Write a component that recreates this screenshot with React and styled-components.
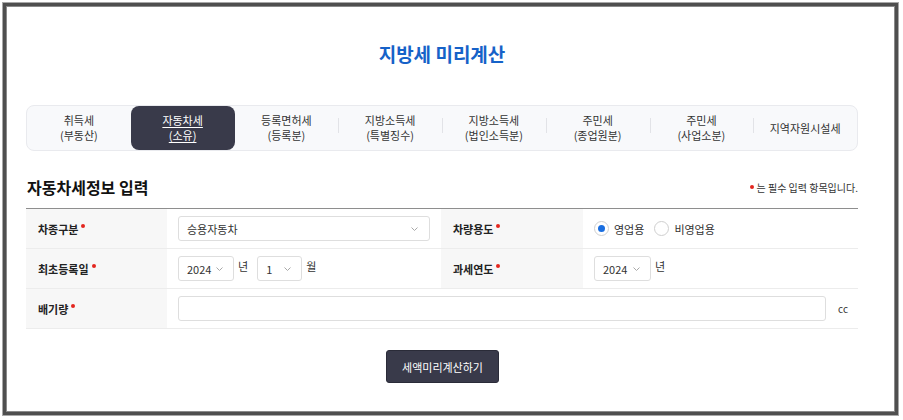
import React from "react";
import styled, { createGlobalStyle } from "styled-components";

const Global = createGlobalStyle`
  html, body { margin: 0; padding: 0; background: #fff; }
  body { font-family: "Noto Sans CJK KR", "Noto Sans", sans-serif; color: #333; }
  * { box-sizing: border-box; }
`;

const Frame = styled.div`
  margin: 3px;
  width: 895px;
  height: 412px;
  border: 3px solid #4f4f4f;
  box-shadow: 0 0 0 1px #a8a8a8, inset 0 0 0 1px #8a8a8a;
  background: #fff;
  padding: 0 0 0 20px;
`;

const Content = styled.div`
  width: 832px;
  display: flex;
  flex-direction: column;
`;

const Title = styled.h1`
  margin: 35px 0 0;
  font-size: 19px;
  line-height: 26px;
  font-weight: 700;
  color: #1662c8;
  text-align: center;
`;

const TabBar = styled.div`
  margin-top: 38px;
  height: 46px;
  display: grid;
  grid-template-columns: repeat(8, 1fr);
  background: #f8f9fb;
  border: 1px solid #e9eaee;
  border-radius: 8px;
`;

const Tab = styled.div`
  position: relative;
  display: flex;
  align-items: center;
  justify-content: center;
  text-align: center;
  font-size: 11px;
  line-height: 15px;
  color: ${(p) => (p.$active ? "#fff" : "#333")};
  background: ${(p) => (p.$active ? "#393a4a" : "transparent")};
  border-radius: 8px;
  text-decoration: ${(p) => (p.$active ? "underline" : "none")};
  text-underline-offset: 2px;
  &::before {
    content: "";
    display: ${(p) => (p.$sep ? "block" : "none")};
    position: absolute;
    left: 0;
    top: 12px;
    width: 1px;
    height: 15px;
    background: #e2e3e7;
  }
`;

const HeadRow = styled.div`
  margin-top: 24px;
  display: flex;
  align-items: center;
  justify-content: space-between;
  height: 24px;
`;

const Heading = styled.h2`
  margin: 0 0 0 1px;
  font-size: 16px;
  line-height: 24px;
  font-weight: 700;
  color: #111;
`;

const Note = styled.span`
  font-size: 10px;
  color: #333;
  display: flex;
  align-items: center;
  gap: 3px;
`;

const Dot = styled.span`
  display: inline-block;
  width: 4px;
  height: 4px;
  border-radius: 50%;
  background: #e3261f;
  flex: none;
`;

const Table = styled.div`
  margin-top: 9px;
  border-top: 1px solid #8e8e8e;
  display: grid;
  grid-template-columns: 141px 274px 142px 1fr;
`;

const Label = styled.div`
  height: 40px;
  background: #f7f7f7;
  border-bottom: 1px solid #ececec;
  display: flex;
  align-items: center;
  padding-left: 12px;
  font-size: 11px;
  font-weight: 700;
  color: #222;
  gap: 3px;
  & > ${Dot} { margin-top: -5px; }
`;

const Cell = styled.div`
  height: 40px;
  border-bottom: 1px solid #ececec;
  display: flex;
  align-items: center;
  padding: 0 11px;
  gap: ${(p) => p.$gap || "4px"};
  grid-column: ${(p) => p.$span || "auto"};
  font-size: 11px;
  color: #333;
`;

const SelectBox = styled.div`
  width: ${(p) => p.$w};
  height: 25px;
  border: 1px solid #dedede;
  border-radius: 3px;
  background: #fff;
  display: flex;
  align-items: center;
  justify-content: space-between;
  padding: 0 ${(p) => p.$pr || "12px"} 0 8px;
  font-size: 11px;
  color: #333;
  flex: none;
`;

const Unit = styled.span`
  font-size: 11px;
  color: #333;
  align-self: flex-start;
  margin-top: 9px;
  margin-right: ${(p) => p.$mr || "0"};
`;

const TextInput = styled.div`
  flex: 1;
  height: 25px;
  border: 1px solid #dedede;
  border-radius: 3px;
  background: #fff;
`;

const CC = styled.span`
  font-size: 10px;
  color: #333;
  margin-left: 12px;
  margin-right: -1px;
`;

const RadioGroup = styled.label`
  display: flex;
  align-items: center;
  gap: 5px;
  margin-right: 10px;
  font-size: 11px;
  color: #333;
`;

const RadioCircle = styled.span`
  width: 15px;
  height: 15px;
  border-radius: 50%;
  border: 1px solid #cfcfcf;
  background: #fff;
  display: flex;
  align-items: center;
  justify-content: center;
  &::after {
    content: "";
    display: ${(p) => (p.$on ? "block" : "none")};
    width: 7px;
    height: 7px;
    border-radius: 50%;
    background: #1a6ee0;
  }
`;

const ButtonRow = styled.div`
  margin-top: 21px;
  display: flex;
  justify-content: center;
`;

const Button = styled.button`
  width: 113px;
  height: 33px;
  background: #393a4a;
  color: #fff;
  border: 1px solid #2a2b38;
  border-radius: 3px;
  font-family: inherit;
  font-size: 11px;
  margin-left: 1px;
`;

const Chevron = () => (
  <svg width="7" height="4" viewBox="0 0 7 4" fill="none">
    <polyline points="0.5,0.5 3.5,3.5 6.5,0.5" stroke="#a8a8a8" strokeWidth="1" />
  </svg>
);

const tabs = [
  ["취득세", "(부동산)"],
  ["자동차세", "(소유)"],
  ["등록면허세", "(등록분)"],
  ["지방소득세", "(특별징수)"],
  ["지방소득세", "(법인소득분)"],
  ["주민세", "(종업원분)"],
  ["주민세", "(사업소분)"],
  ["지역자원시설세"],
];

const ACTIVE = 1;

export default function App() {
  return (
    <>
      <Global />
      <Frame>
        <Content>
          <Title>지방세 미리계산</Title>
          <TabBar>
            {tabs.map((t, i) => (
              <Tab
                key={i}
                $active={i === ACTIVE}
                $sep={i > 0 && i !== ACTIVE && i - 1 !== ACTIVE && i !== 1}
              >
                <span>
                  {t[0]}
                  {t[1] && <br />}
                  {t[1]}
                </span>
              </Tab>
            ))}
          </TabBar>
          <HeadRow>
            <Heading>자동차세정보 입력</Heading>
            <Note>
              <Dot />는 필수 입력 항목입니다.
            </Note>
          </HeadRow>
          <Table>
            <Label>
              차종구분<Dot />
            </Label>
            <Cell>
              <SelectBox $w="252px" $pr="11px">
                <span>승용자동차</span>
                <Chevron />
              </SelectBox>
            </Cell>
            <Label>
              차량용도<Dot />
            </Label>
            <Cell $gap="0">
              <RadioGroup>
                <RadioCircle $on />
                영업용
              </RadioGroup>
              <RadioGroup>
                <RadioCircle />
                비영업용
              </RadioGroup>
            </Cell>

            <Label>
              최초등록일<Dot />
            </Label>
            <Cell>
              <SelectBox $w="56px" $pr="10px">
                <span>2024</span>
                <Chevron />
              </SelectBox>
              <Unit $mr="5px">년</Unit>
              <SelectBox $w="45px" $pr="10px">
                <span>1</span>
                <Chevron />
              </SelectBox>
              <Unit>월</Unit>
            </Cell>
            <Label>
              과세연도<Dot />
            </Label>
            <Cell>
              <SelectBox $w="57px" $pr="10px">
                <span>2024</span>
                <Chevron />
              </SelectBox>
              <Unit>년</Unit>
            </Cell>

            <Label>
              배기량<Dot />
            </Label>
            <Cell $span="2 / 5" $gap="0">
              <TextInput />
              <CC>cc</CC>
            </Cell>
          </Table>
          <ButtonRow>
            <Button>세액미리계산하기</Button>
          </ButtonRow>
        </Content>
      </Frame>
    </>
  );
}
